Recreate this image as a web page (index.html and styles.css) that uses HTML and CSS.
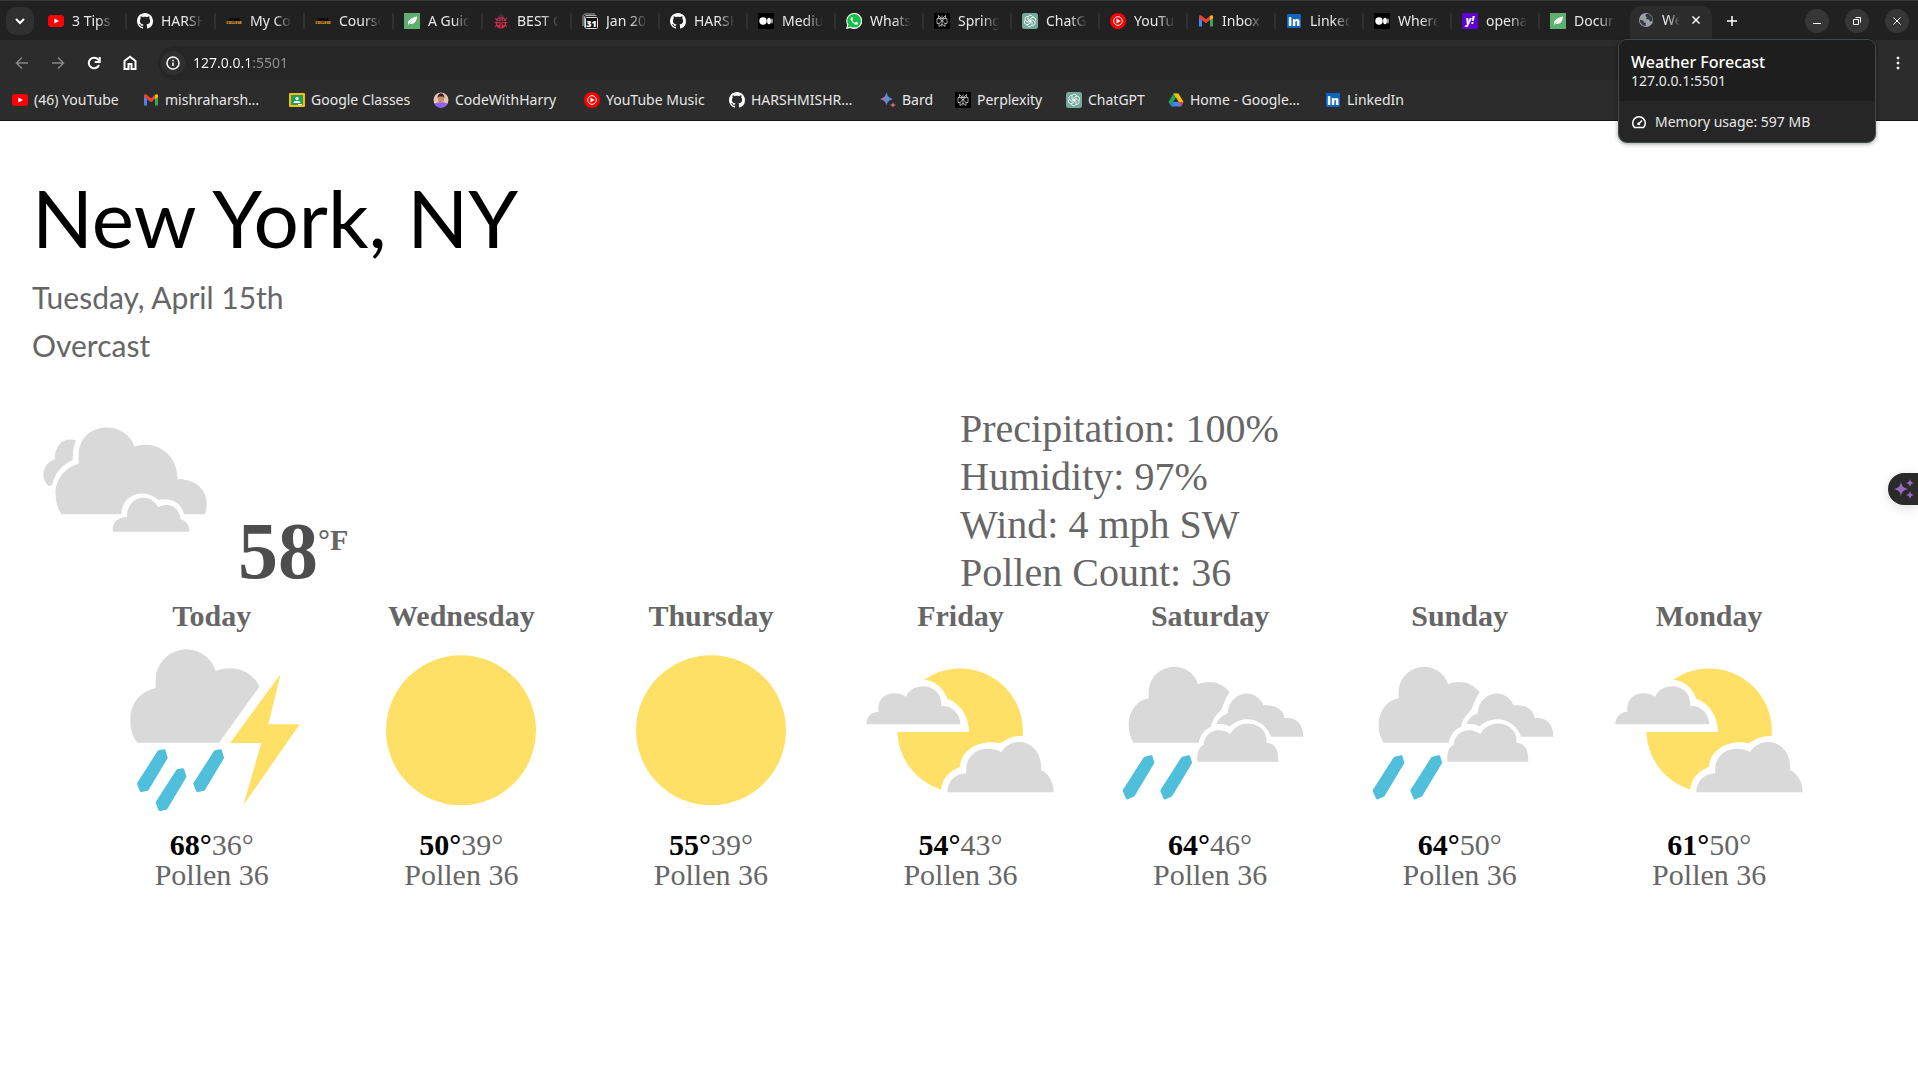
FILE: index.html
```html
<!DOCTYPE html>
<html lang="en">
<head>
<meta charset="utf-8">
<title>Weather Forecast</title>
<link rel="stylesheet" href="styles.css">
</head>
<body>
<svg class="sprite" aria-hidden="true">
  <defs>
    <linearGradient id="spark" x1="0" y1="0" x2="1" y2="0"><stop offset="0" stop-color="#e8705f"/><stop offset=".4" stop-color="#7d7fd6"/><stop offset="1" stop-color="#2fa3e0"/></linearGradient>
    <symbol id="youtube" viewBox="0 0 16 16"><rect y="2" width="16" height="12" rx="3" fill="#f00"/><path d="M6.3 5.5 11 8l-4.700 2.500z" fill="#fff"/></symbol>
    <symbol id="github" viewBox="0 0 16 16"><path fill="#fff" d="M8 0C3.580 0 0 3.580 0 8c0 3.540 2.290 6.530 5.470 7.590.4.070.55-.17.55-.38 0-.19-.01-.82-.01-1.490-2.010.37-2.530-.49-2.690-.94-.09-.23-.48-.94-.82-1.130-.28-.15-.68-.52-.01-.53.63-.01 1.080.58 1.230.82.72 1.210 1.870.87 2.330.66.07-.52.28-.87.51-1.070-1.780-.2-3.640-.89-3.640-3.950 0-.87.31-1.590.82-2.150-.08-.2-.36-1.020.08-2.120 0 0 .67-.21 2.200.82.64-.18 1.320-.27 2-.27s1.360.09 2 .27c1.530-1.040 2.200-.82 2.200-.82.44 1.100.16 1.920.08 2.120.51.56.82 1.270.82 2.150 0 3.070-1.870 3.750-3.650 3.950.29.25.54.73.54 1.480 0 1.070-.01 1.930-.01 2.200 0 .21.15.46.55.38A8.010 8.010 0 0 0 16 8c0-4.420-3.580-8-8-8z"/></symbol>
    <symbol id="college" viewBox="0 0 16 16"><text x="8" y="7.500" font-size="4" text-anchor="middle" class="mini-logo" fill="#000">APNA</text><text x="8" y="11" font-size="3.500" text-anchor="middle" class="mini-logo" fill="#f5a21c">COLLEGE</text></symbol>
    <symbol id="leaf" viewBox="0 0 16 16"><path d="M0 0h16v16H0z" fill="#5fb06f"/><path d="M4 11.500C3.500 7 7 5 13 3.500c-.2 5.500-3.500 8-7.500 7.500L10 6.500 4.800 10.800 4 12.500z" fill="#fff"/></symbol>
    <symbol id="bug" viewBox="0 0 16 16"><path d="M5 4a3 3 0 0 1 6 0z" fill="#30343c"/><path d="M2 5l2 2M1.500 9.500H4M2 14l2-2M14 5l-2 2M14.500 9.500H12M14 14l-2-2" stroke="#a3293e" stroke-width="1.200"/><ellipse cx="8" cy="9.700" rx="5.300" ry="6" fill="#d92b4b"/><path d="M8 4v12M3 8.500h10" stroke="#262626"/><g fill="#262626"><circle cx="5.600" cy="6.700" r=".9"/><circle cx="10.400" cy="6.700" r=".9"/><circle cx="5.400" cy="11" r="1.200"/><circle cx="10.600" cy="11" r="1.200"/></g></symbol>
    <symbol id="calendar" viewBox="0 0 16 16"><path d="M1 13V2.500L2.500 1H13M2.500 14.500V3.500L4 2.500h10.500" fill="none" stroke="#aaa"/><rect x="3.500" y="4.500" width="12" height="11" rx="1" fill="#111" stroke="#ddd"/><text x="9.500" y="13.500" font-size="9" text-anchor="middle" class="mini-logo" fill="#fff">31</text></symbol>
    <symbol id="medium" viewBox="0 0 16 16"><path d="M0 0h16v16H0z" fill="#000"/><circle cx="5" cy="8" r="3.700" fill="#fff"/><ellipse cx="11" cy="8" rx="1.900" ry="3.200" fill="#fff"/><ellipse cx="14" cy="8" rx=".8" ry="2.800" fill="#ccc"/></symbol>
    <symbol id="whatsapp" viewBox="0 0 16 16"><path d="M0 16l1.200-4.300A8 8 0 1 1 4.300 14.900z" fill="#fff"/><path d="M1.600 14.400l.8-2.900a6.800 6.800 0 1 1 2.300 2.200z" fill="#0fc144"/><path d="M5.500 4C4 5 4.400 7 6.200 9.200 8.500 11.700 10.700 12.500 12 11l.1-1.300-2-.9-1 1c-1.300-.4-2.300-1.400-2.800-2.500l.7-.9L6.300 4z" fill="#fff"/></symbol>
    <symbol id="perplexity" viewBox="0 0 16 16"><rect width="16" height="16" rx="1" fill="#000"/><path d="M8 2.500v11M3 5.500h10v5h-2.500M5.500 10.500H3v-5M4.500 2.500V5L8 8l3.500-3V2.500L8 6 4.500 2.500M5 13.500v-3L8 7.500l3 3v3L8 11z" fill="none" stroke="#ccc" stroke-width=".8"/></symbol>
    <symbol id="chatgpt" viewBox="0 0 16 16"><rect width="16" height="16" rx="2.500" fill="#74aa9c"/><g fill="none" stroke="#fff" stroke-width=".85"><path id="petal" d="M6 7V4.600c0-3 4.500-3 4.900-.3M6 7l2.200 1.300"/><use href="#petal" transform="rotate(60 8 8)"/><use href="#petal" transform="rotate(120 8 8)"/><use href="#petal" transform="rotate(180 8 8)"/><use href="#petal" transform="rotate(240 8 8)"/><use href="#petal" transform="rotate(300 8 8)"/></g></symbol>
    <symbol id="ytmusic" viewBox="0 0 16 16"><circle cx="8" cy="8" r="8" fill="#f00"/><circle cx="8" cy="8" r="4.300" fill="none" stroke="#fff"/><path d="M6.500 5.500 10.700 8l-4.200 2.500z" fill="#fff"/></symbol>
    <symbol id="gmail" viewBox="0 0 16 16"><path d="M1 4v9.500h3V7z" fill="#4285f4"/><path d="M12 7v6.500h3V4z" fill="#34a853"/><path d="M1 3.500C1 2 3 2 4 3l4 3.200L12 3v4L8 10.200 1 5z" fill="#ea4335"/><path d="M12 3c1-1 3-1 3 .5V5l-3 2.300z" fill="#fbbc04"/></symbol>
    <symbol id="linkedin" viewBox="0 0 16 16"><rect x="1" y="1" width="14" height="14" rx="1" fill="#0a66c2"/><text x="8" y="12.500" font-size="12" text-anchor="middle" class="mini-logo" fill="#fff">in</text></symbol>
    <symbol id="yahoo" viewBox="0 0 16 16"><path d="M0 0h16v16H0z" fill="#5f01d1"/><text x="8" y="11" font-size="10" text-anchor="middle" class="mini-logo slant" fill="#fff">y!</text></symbol>
    <symbol id="globe" viewBox="0 0 16 16"><circle cx="8" cy="8" r="7" fill="#9aa0a6"/><path d="M2 7.500 5.500 9l.5 1.500 2 .5-.5 3-2.500-.5-3-3.500zM8 2l-.5 2L9 5.500 8 7l3 .5 1 2 2.500-.5L14 5l-3-3z" fill="#33363a"/></symbol>
    <symbol id="classroom" viewBox="0 0 16 16"><rect y="1" width="16" height="14" rx="1" fill="#fbbc04"/><path d="M2 3h12v10H2z" fill="#23a05b"/><circle cx="8" cy="6.300" r="1.600" fill="#fff"/><path d="M4.500 11c0-3 7-3 7 0z" fill="#fff"/><path d="M9 12h4v1H9z" fill="#f3f3f3"/></symbol>
    <symbol id="portrait" viewBox="0 0 16 16"><circle cx="8" cy="8" r="7.500" fill="#e7c3b2"/><path d="M1.500 12C3 9.500 13 9.500 14.500 12 12 17 4 17 1.500 12z" fill="#8c62f2"/><ellipse cx="8" cy="6.800" rx="3" ry="4" fill="#c98a70"/><path d="M4.500 6C4.500-.5 11.500-.5 11.500 6L10 4.500H6z" fill="#34202b"/></symbol>
    <symbol id="bard" viewBox="0 0 16 16"><path d="M6.500 0C7.500 4.500 9 6 13 7c-4 1-5.500 2.500-6.500 6.500C5.500 9.500 4 8 0 7c4-1 5.500-2.500 6.500-7z" fill="url(#spark)"/><path d="M13 10c.5 2 1 2.500 3 3-2 .5-2.500 1-3 3-.5-2-1-2.500-3-3 2-.5 2.500-1 3-3z" fill="#d66a80"/></symbol>
    <symbol id="drive" viewBox="0 0 16 16"><path d="M5.500 1.500h5L5.500 10 3 14 .5 10z" fill="#20a464"/><path d="M5.500 1.500h5l5 8.500h-5z" fill="#fbbc04"/><path d="M5.500 10h10L13 14.500H3z" fill="#4285f4"/><path d="M8 5.500 10.500 10h-5z" fill="#2c2c2c"/><path d="M15.500 10 13 14.500 10.500 10z" fill="#ea4335"/></symbol>

    <symbol id="overcast" viewBox="36 15 600 519"><g fill="#d9d9d9"><path d="M125 343C95 300 95 215 176 191V165C176 65 315 55 344 140 400 120 472 155 473 238 520 236 560 265 560 310 560 325 558 335 554 343H492C485 310 455 292 415 300 375 262 305 280 304 343z"/><path d="M85 257C60 235 67 190 105 178 103 135 130 110 168 121 160 140 158 160 158 180 125 195 105 220 96 256z"/><path d="M279 395C274 370 295 350 321 351 318 295 385 270 415 322 445 303 482 325 481 358 500 362 509 378 508 395z"/></g></symbol>
    <symbol id="storm" viewBox="34 120 600 600"><path d="M110 458C95 440 89 415 89 390 89 340 120 303 165 295V271A92 92 0 0 1 345 243C395 222 455 240 476 290L355 458z" fill="#d9d9d9"/><path d="M540 252 503 403h94L428 646l54-187h-94z" fill="#ffe066"/><path id="drop" d="M175 486 190 483 196 503 140 597 122 601 114 581z" fill="#4fbfdb" stroke="#4fbfdb" stroke-width="10" stroke-linejoin="round"/><use href="#drop" x="56" y="57"/><use href="#drop" x="169"/></symbol>
    <symbol id="sunny" viewBox="783 120 600 600"><circle cx="1083" cy="421" r="225" fill="#ffe066"/></symbol>
    <symbol id="partly" viewBox="60 120 600 600"><path d="M253 269A188 188 0 0 1 548 438C522 436 500 446 480 460 420 445 362 480 360 530 325 545 308 565 303 599A188 188 0 0 1 172 426H387C387 378 360 340 322 326 310 292 285 272 253 269z" fill="#ffe066"/><g fill="#d9d9d9"><path d="M79 403C79 380 95 365 116 365 108 315 160 297 198 320 220 270 308 280 304 347 340 347 361 375 361 403z"/><path d="M322 607C322 575 345 551 379 550 372 488 430 460 484 486 520 430 610 455 603 540 625 550 641 575 641 607z"/></g></symbol>
    <symbol id="showers" viewBox="809 120 600 600"><g fill="#d9d9d9"><path d="M880 458C868 440 865 420 865 405 865 365 890 330 925 325V308A76 76 0 0 1 1073 282C1105 270 1145 275 1168 307 1155 325 1150 345 1142 360 1130 372 1115 390 1112 410 1090 420 1080 435 1075 458z"/><path d="M1128 402C1135 385 1150 375 1162 370 1165 310 1240 285 1270 346 1300 343 1330 355 1333 385 1365 380 1389 400 1389 440H1292C1280 395 1215 365 1168 409 1155 402 1140 402 1128 402z"/><path d="M1071 515C1069 490 1075 470 1090 465 1092 425 1135 408 1170 432 1200 378 1285 398 1278 458 1305 460 1314 480 1314 515z"/></g><path id="streak" d="M914 505 932 501 937 518 879 615 861 623 852 602z" fill="#4fbfdb" stroke="#4fbfdb" stroke-width="10" stroke-linejoin="round"/><use href="#streak" x="113"/></symbol>
  </defs>
</svg>

<header class="browser">
  <div class="tabstrip">
    <button class="tab-search" aria-label="Search tabs"><svg viewBox="0 0 16 16"><path d="M4 6l4 4 4-4"/></svg></button>
    <nav class="tabs" aria-label="Tabs">
      <button class="tab"><svg class="favicon"><use href="#youtube"/></svg><span>3 Tips</span></button>
      <button class="tab"><svg class="favicon"><use href="#github"/></svg><span>HARSH</span></button>
      <button class="tab"><svg class="favicon"><use href="#college"/></svg><span>My Co</span></button>
      <button class="tab"><svg class="favicon"><use href="#college"/></svg><span>Course</span></button>
      <button class="tab"><svg class="favicon"><use href="#leaf"/></svg><span>A Guid</span></button>
      <button class="tab"><svg class="favicon"><use href="#bug"/></svg><span>BEST C</span></button>
      <button class="tab"><svg class="favicon"><use href="#calendar"/></svg><span>Jan 20</span></button>
      <button class="tab"><svg class="favicon"><use href="#github"/></svg><span>HARSH</span></button>
      <button class="tab"><svg class="favicon"><use href="#medium"/></svg><span>Mediu</span></button>
      <button class="tab"><svg class="favicon"><use href="#whatsapp"/></svg><span>Whats</span></button>
      <button class="tab"><svg class="favicon"><use href="#perplexity"/></svg><span>Spring</span></button>
      <button class="tab"><svg class="favicon"><use href="#chatgpt"/></svg><span>ChatG</span></button>
      <button class="tab"><svg class="favicon"><use href="#ytmusic"/></svg><span>YouTu</span></button>
      <button class="tab"><svg class="favicon"><use href="#gmail"/></svg><span>Inbox</span></button>
      <button class="tab"><svg class="favicon"><use href="#linkedin"/></svg><span>Linked</span></button>
      <button class="tab"><svg class="favicon"><use href="#medium"/></svg><span>Where</span></button>
      <button class="tab"><svg class="favicon"><use href="#yahoo"/></svg><span>opena</span></button>
      <button class="tab"><svg class="favicon"><use href="#leaf"/></svg><span>Docun</span></button>
    </nav>
    <div class="tab-active"><svg class="favicon"><use href="#globe"/></svg><span>We</span><button class="icon-button" aria-label="Close tab"><svg viewBox="0 0 16 16"><path d="M4.500 4.500l7 7M11.500 4.500l-7 7"/></svg></button></div>
    <button class="icon-button new-tab" aria-label="New tab"><svg viewBox="0 0 16 16"><path d="M8 3v10M3 8h10"/></svg></button>
    <div class="window-controls">
      <button aria-label="Minimize"><svg viewBox="0 0 24 24"><path d="M8 14.500h8"/></svg></button>
      <button aria-label="Restore"><svg viewBox="0 0 24 24"><path d="M8.500 10.500h5v5h-5zM10.500 8.500h5v5"/></svg></button>
      <button aria-label="Close"><svg viewBox="0 0 24 24"><path d="M8.500 8.500l7 7M15.500 8.500l-7 7"/></svg></button>
    </div>
  </div>

  <div class="toolbar">
    <button class="nav-button muted" aria-label="Back"><svg viewBox="0 0 16 16"><path d="M14 8H2.500M8 2.500 2.500 8 8 13.500"/></svg></button>
    <button class="nav-button muted" aria-label="Forward"><svg viewBox="0 0 16 16"><path d="M2 8h11.500M8 2.500 13.500 8 8 13.500"/></svg></button>
    <button class="nav-button" aria-label="Reload"><svg viewBox="0 0 16 16"><path d="M13 10A5.300 5.300 0 1 1 12.500 5L13.500 6.500M13.700 2v5h-5"/></svg></button>
    <button class="nav-button" aria-label="Home"><svg viewBox="0 0 16 16"><path d="M2.500 14V6L8 1.700 13.500 6v8h-4V9h-3v5z"/></svg></button>
    <form class="omnibox">
      <button type="button" class="site-info" aria-label="View site information"><svg viewBox="0 0 16 16"><circle cx="8" cy="8" r="6"/><path d="M8 7.500V11M8 4.800v1.400"/></svg></button>
      <input class="address" type="text" value="127.0.0.1:5501" aria-label="Address">
    </form>
    <button class="nav-button menu" aria-label="Menu"><svg viewBox="0 0 16 16"><circle cx="8" cy="3" r="1"/><circle cx="8" cy="8" r="1"/><circle cx="8" cy="13" r="1"/></svg></button>
  </div>

  <nav class="bookmarks" aria-label="Bookmarks">
    <a href="#"><svg class="favicon"><use href="#youtube"/></svg>(46) YouTube</a>
    <a href="#"><svg class="favicon"><use href="#gmail"/></svg>mishraharsh…</a>
    <a href="#"><svg class="favicon"><use href="#classroom"/></svg>Google Classes</a>
    <a href="#"><svg class="favicon"><use href="#portrait"/></svg>CodeWithHarry</a>
    <a href="#"><svg class="favicon"><use href="#ytmusic"/></svg>YouTube Music</a>
    <a href="#"><svg class="favicon"><use href="#github"/></svg>HARSHMISHR…</a>
    <a href="#"><svg class="favicon"><use href="#bard"/></svg>Bard</a>
    <a href="#"><svg class="favicon"><use href="#perplexity"/></svg>Perplexity</a>
    <a href="#"><svg class="favicon"><use href="#chatgpt"/></svg>ChatGPT</a>
    <a href="#"><svg class="favicon"><use href="#drive"/></svg>Home - Google…</a>
    <a href="#"><svg class="favicon"><use href="#linkedin"/></svg>LinkedIn</a>
  </nav>

  <aside class="tab-card">
    <div class="tab-card-top"><strong>Weather Forecast</strong><span>127.0.0.1:5501</span></div>
    <div class="tab-card-memory"><svg viewBox="0 0 16 16"><path d="M3.500 13.500A6.300 6.300 0 1 1 12.500 13.500zM7.500 10 11 6.500"/><circle cx="7.700" cy="9.800" r=".8"/></svg>Memory usage: 597 MB</div>
  </aside>
</header>

<main class="weather">
  <h1>New York, NY</h1>
  <p class="summary">Tuesday, April 15th</p>
  <p class="summary">Overcast</p>

  <section class="current">
    <div class="now">
      <svg class="now-icon" role="img" aria-label="Overcast"><use href="#overcast"/></svg>
      <p class="temperature">58<sup>°F</sup></p>
    </div>
    <ul class="details">
      <li>Precipitation: 100%</li>
      <li>Humidity: 97%</li>
      <li>Wind: 4 mph SW</li>
      <li>Pollen Count: 36</li>
    </ul>
  </section>

  <section class="forecast">
    <article><h2>Today</h2><svg><use href="#storm"/></svg><p><b>68°</b>36°</p><p>Pollen 36</p></article>
    <article><h2>Wednesday</h2><svg><use href="#sunny"/></svg><p><b>50°</b>39°</p><p>Pollen 36</p></article>
    <article><h2>Thursday</h2><svg><use href="#sunny"/></svg><p><b>55°</b>39°</p><p>Pollen 36</p></article>
    <article><h2>Friday</h2><svg><use href="#partly"/></svg><p><b>54°</b>43°</p><p>Pollen 36</p></article>
    <article><h2>Saturday</h2><svg><use href="#showers"/></svg><p><b>64°</b>46°</p><p>Pollen 36</p></article>
    <article><h2>Sunday</h2><svg><use href="#showers"/></svg><p><b>64°</b>50°</p><p>Pollen 36</p></article>
    <article><h2>Monday</h2><svg><use href="#partly"/></svg><p><b>61°</b>50°</p><p>Pollen 36</p></article>
  </section>
</main>

<button class="assistant" aria-label="Open assistant"><svg viewBox="0 0 20 20"><path d="M7 3c1 4.500 2.500 6 7 7-4.500 1-6 2.500-7 7-1-4.500-2.500-6-7-7 4.500-1 6-2.500 7-7zM16 0c.5 2.500 1.500 3.500 4 4-2.500.5-3.500 1.500-4 4-.5-2.500-1.500-3.500-4-4 2.500-.5 3.500-1.500 4-4zM16 12c.5 2.500 1.500 3.500 4 4-2.500.5-3.500 1.500-4 4-.5-2.500-1.500-3.500-4-4 2.500-.5 3.500-1.500 4-4z"/></svg></button>
</body>
</html>
```
FILE: styles.css
```css
* {
  box-sizing: border-box;
}

body,
h1,
h2,
p,
ul {
  margin: 0;
  padding: 0;
}

body {
  background: #fff;
  font-family: "Liberation Serif", serif;
  color: #666;
}

button {
  border: 0;
  padding: 0;
  background: none;
  color: inherit;
  font: inherit;
}

svg {
  display: block;
  flex: none;
}

.sprite {
  position: absolute;
  width: 0;
  height: 0;
}

.mini-logo {
  font-family: "Open Sans", sans-serif;
  font-weight: 800;
}

.slant {
  font-style: italic;
}

/* Browser window */
.browser {
  position: relative;
  background: #2c2c2c;
  border-bottom: 1px solid #161616;
  color: #e8e8e8;
  font: 14px/20px "Noto Sans", sans-serif;
}

.favicon {
  width: 16px;
  height: 16px;
}

.tabstrip {
  display: flex;
  align-items: center;
  height: 40px;
  background: #212121;
  border-top: 1px solid #363636;
}

.tab-search {
  display: grid;
  place-items: center;
  width: 28px;
  height: 28px;
  margin: 0 3px 0 6px;
  border-radius: 10px;
  background: #303030;
}

.tab-search svg,
.icon-button svg {
  width: 16px;
  height: 16px;
  fill: none;
  stroke: #fff;
  stroke-width: 2;
}

.tabs {
  flex: 1;
  display: grid;
  grid-template-columns: repeat(6, 89fr) repeat(12, 88fr);
}

.tab {
  display: flex;
  align-items: center;
  gap: 8px;
  min-width: 0;
  padding: 0 9px 0 11px;
  position: relative;
  text-align: left;
}

.tab:not(:last-child)::after {
  content: "";
  position: absolute;
  right: -1px;
  top: 2px;
  width: 2px;
  height: 16px;
  background: #303030;
}

.tab span,
.tab-active span {
  flex: 1;
  min-width: 0;
  overflow: hidden;
  white-space: nowrap;
  mask-image: linear-gradient(to left, transparent 3px, #000 20px);
}

.tab-active {
  display: flex;
  align-items: center;
  align-self: flex-end;
  gap: 8px;
  width: 82px;
  height: 34px;
  margin-left: 3px;
  padding: 0 8px 6px 8px;
  border-radius: 10px 10px 0 0;
  background: #2c2c2c;
}

.tab-active span {
  mask-image: linear-gradient(to left, transparent, #000 12px);
}

.icon-button svg {
  stroke-width: 1.5;
}

.new-tab {
  margin-left: 12px;
}

.window-controls {
  display: flex;
  gap: 16px;
  margin: 0 9px 0 65px;
}

.window-controls button {
  width: 24px;
  height: 24px;
  border-radius: 50%;
  background: #363636;
}

.window-controls svg {
  fill: none;
  stroke: #fff;
}

.toolbar {
  display: flex;
  align-items: center;
  gap: 20px;
  height: 40px;
  padding: 6px 12px 0 14px;
}

.nav-button svg {
  width: 16px;
  height: 16px;
  fill: none;
  stroke: #fff;
  stroke-width: 2;
}

.muted svg {
  stroke: #858585;
  stroke-width: 1.5;
}

.menu svg {
  fill: #fff;
  stroke-width: 1;
}

.omnibox {
  flex: 1;
  display: flex;
  align-items: center;
  gap: 8px;
  height: 34px;
  padding-left: 3px;
  margin: 0;
  border-radius: 17px;
  background: #262626;
}

.site-info {
  display: grid;
  place-items: center;
  width: 24px;
  height: 24px;
  border-radius: 50%;
  background: #303030;
}

.site-info svg {
  width: 16px;
  height: 16px;
  fill: none;
  stroke: #fff;
  stroke-width: 1.5;
}

.address {
  flex: 1;
  padding: 0;
  border: 0;
  outline: 0;
  font: inherit;
  color: transparent;
  background: linear-gradient(to right, #fff 56px, #929292 56px);
  background-clip: text;
}

.bookmarks {
  display: grid;
  grid-template-columns: 131px 146px 144px 151px 145px 151px 75px 111px 102px 157px auto;
  align-items: center;
  height: 40px;
  padding-left: 12px;
}

.bookmarks a {
  display: flex;
  align-items: center;
  gap: 6px;
  color: inherit;
  text-decoration: none;
  white-space: nowrap;
}

.tab-card {
  position: absolute;
  top: 39px;
  right: 42px;
  width: 258px;
  border: 1px solid #414b4d;
  border-radius: 9px;
  overflow: hidden;
  background: #262626;
  box-shadow: 0 1px 4px #0006;
}

.tab-card-top {
  display: flex;
  flex-direction: column;
  height: 61px;
  padding: 12px;
  background: #1e1e1e;
  line-height: 18px;
}

.tab-card-top strong {
  font-size: 16px;
  font-weight: 500;
  line-height: 20px;
  color: #fff;
}

.tab-card-memory {
  display: flex;
  align-items: center;
  gap: 8px;
  height: 41px;
  padding: 0 12px;
}

.tab-card-memory svg {
  width: 16px;
  height: 16px;
  fill: none;
  stroke: #fff;
  stroke-width: 1.5;
}

/* Weather page */
.weather {
  padding: 48px 32px;
}

h1 {
  font: 400 80px/96px Lato, sans-serif;
  color: #000;
  margin-bottom: 8px;
}

.summary {
  font: 30px/48px Lato, sans-serif;
}

.current {
  display: grid;
  grid-template-columns: 1fr 1fr;
  column-gap: 2px;
  margin-top: 36px;
}

.now {
  display: flex;
  align-items: baseline;
  gap: 6px;
}

.now-icon {
  width: 200px;
  height: 173px;
}

.temperature {
  font-size: 80px;
  font-weight: 700;
  line-height: 80px;
  color: #4d4d4d;
}

.temperature sup {
  font-size: 30px;
  line-height: 0;
  vertical-align: 28px;
  color: #666;
}

.details {
  list-style: none;
  font-size: 40px;
  line-height: 48px;
}

.forecast {
  display: grid;
  grid-template-columns: repeat(7, 1fr);
  padding: 0 52px 0 55px;
  margin-top: 5px;
  text-align: center;
  font-size: 30px;
  line-height: 30px;
}

.forecast h2 {
  font-size: 30px;
  line-height: 28px;
}

.forecast svg {
  width: 200px;
  height: 200px;
  margin: 0 auto;
}

.forecast b {
  color: #000;
}

.assistant {
  position: absolute;
  right: 0;
  top: 473px;
  width: 30px;
  height: 32px;
  padding-left: 6px;
  border-radius: 16px 0 0 16px;
  background: #2a2a2a;
  box-shadow: 0 3px 12px #0002;
}

.assistant svg {
  width: 20px;
  height: 20px;
  fill: #9a68bd;
}
```
